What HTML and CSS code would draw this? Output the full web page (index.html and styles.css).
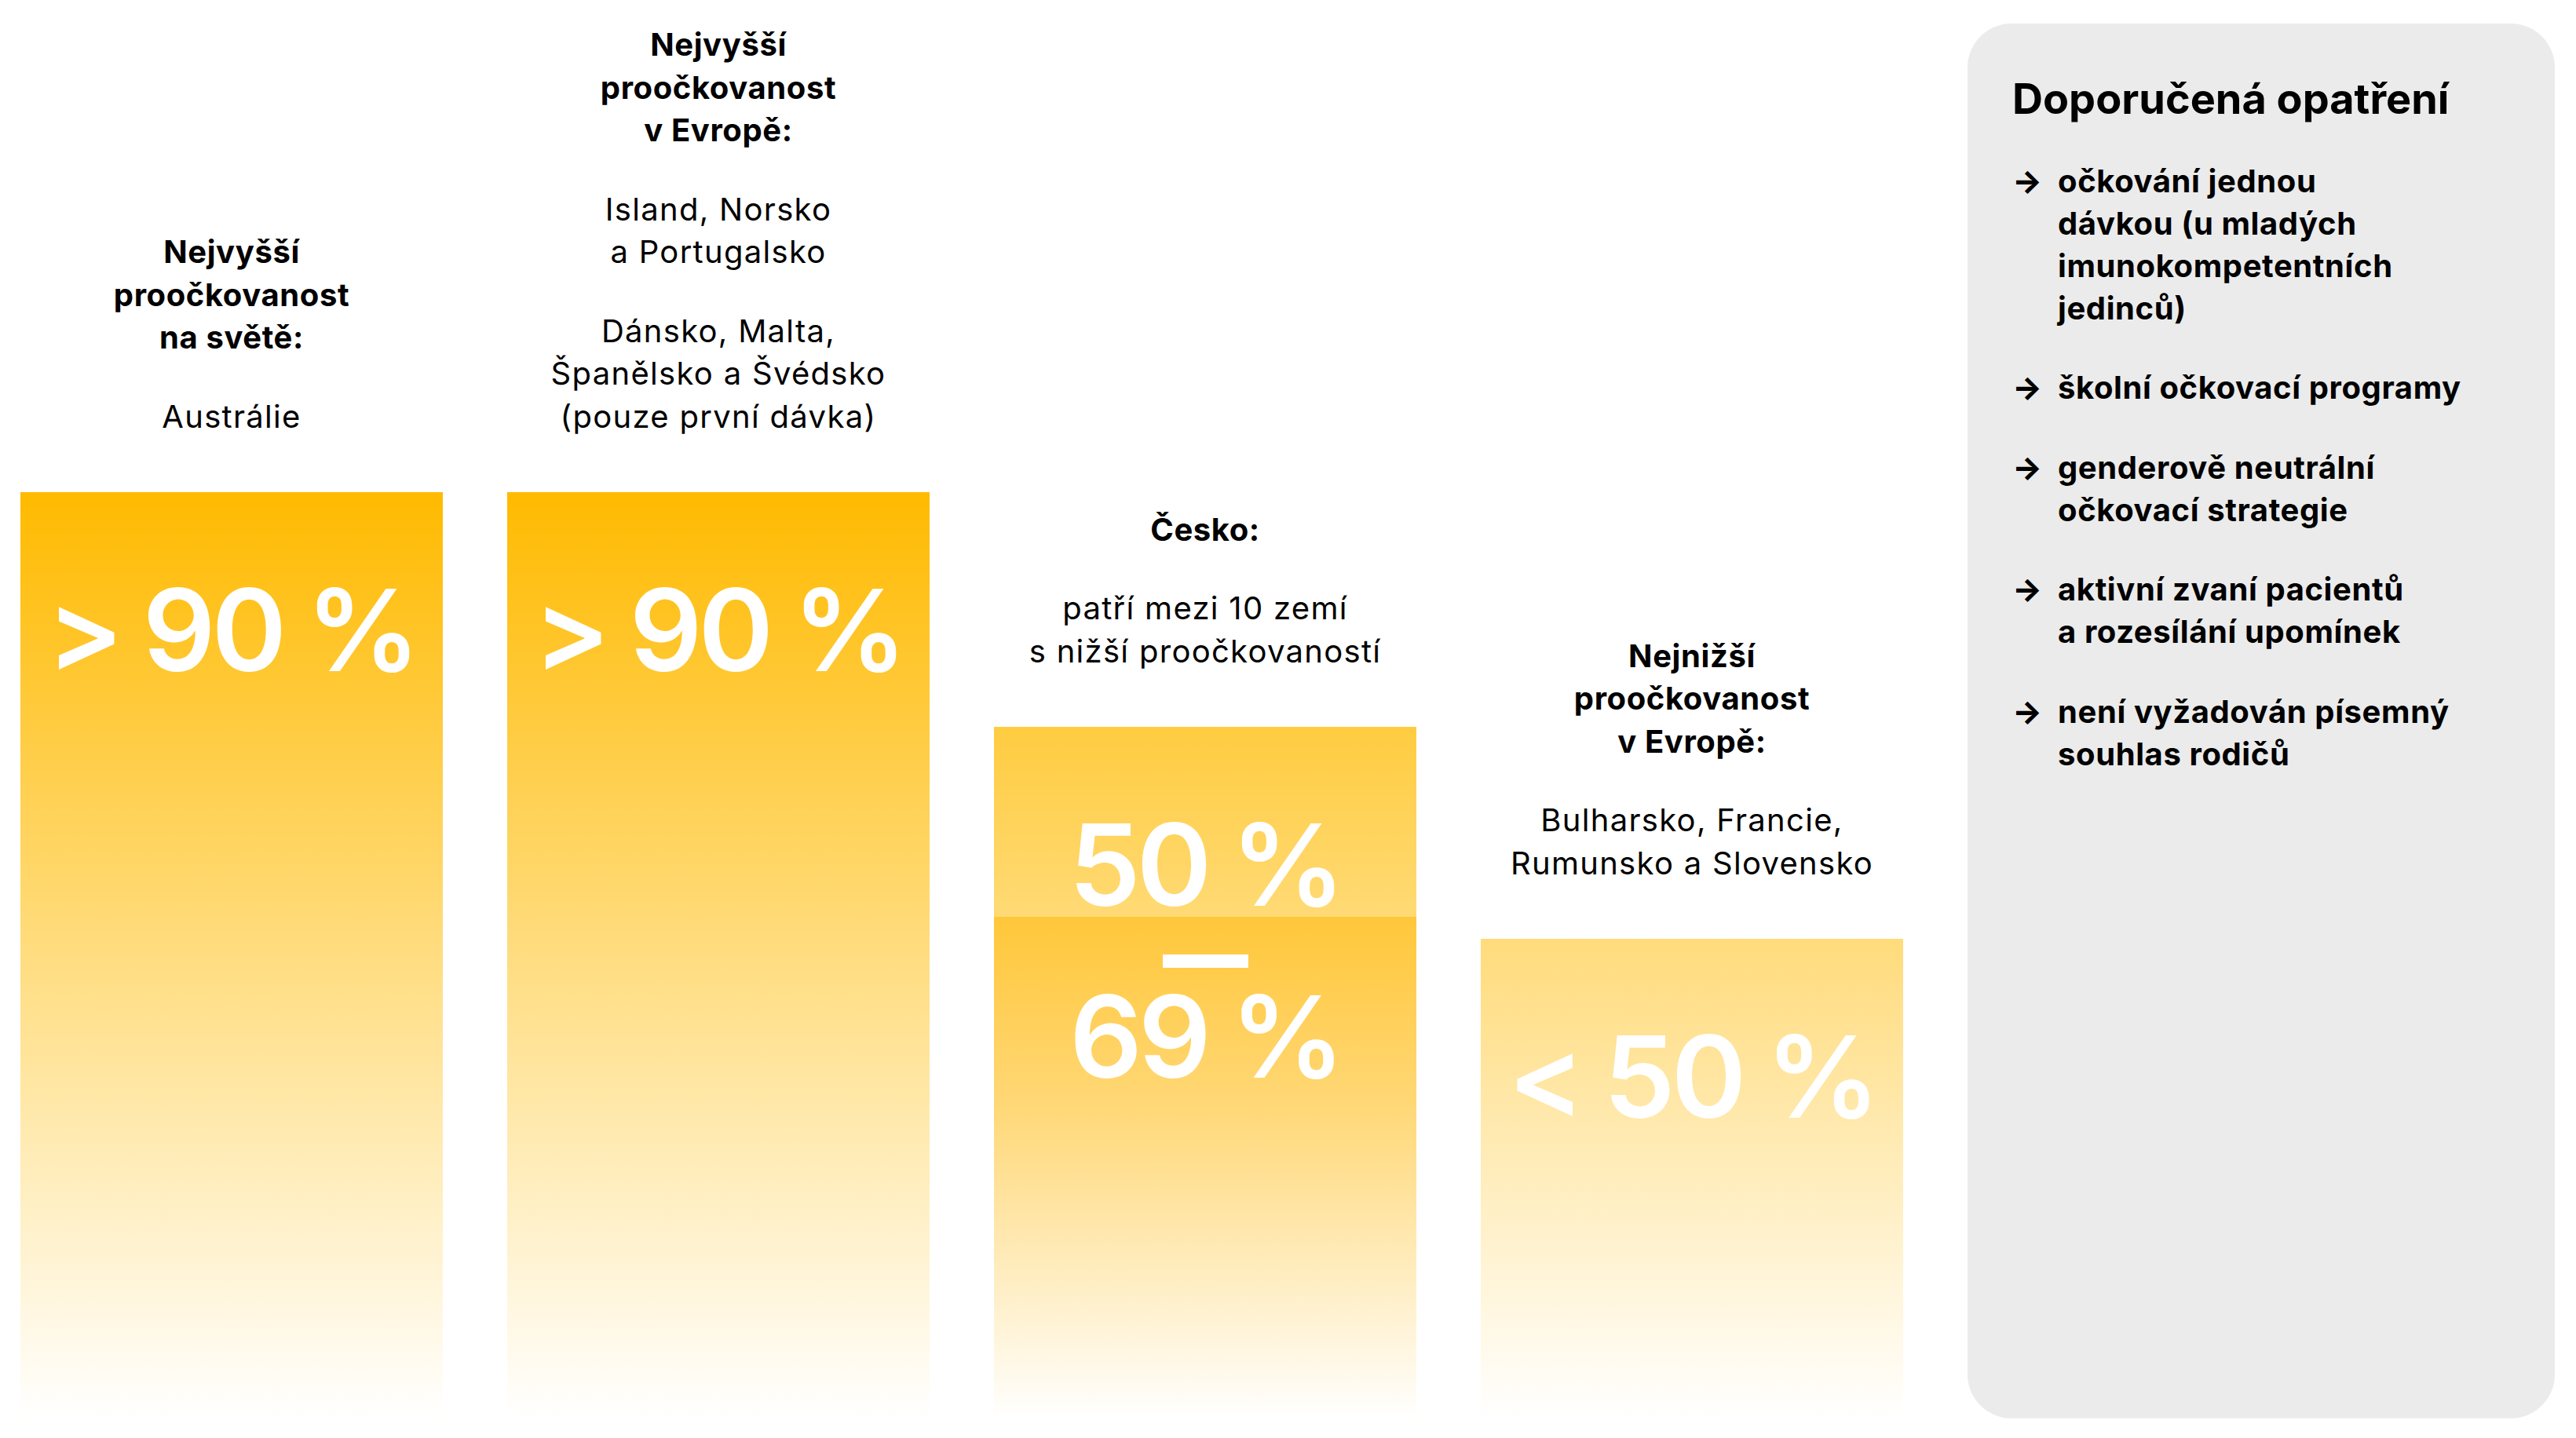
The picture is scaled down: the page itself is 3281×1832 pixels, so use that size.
FILE: index.html
```html
<!DOCTYPE html>
<html lang="cs">
<head>
<meta charset="utf-8">
<title>Proočkovanost</title>
<link rel="stylesheet" href="styles.css">
</head>
<body>
<main class="page">
  <section class="col">
    <div class="label">
      <p class="b">Nejvyšší<br>proočkovanost<br>na světě:</p>
      <p>Austrálie</p>
    </div>
    <div class="bar bar-high"><span class="num">&gt; 90 %</span></div>
  </section>

  <section class="col">
    <div class="label">
      <p class="b">Nejvyšší<br>proočkovanost<br>v Evropě:</p>
      <p>Island, Norsko<br>a Portugalsko</p>
      <p>Dánsko, Malta,<br>Španělsko a Švédsko<br>(pouze první dávka)</p>
    </div>
    <div class="bar bar-high"><span class="num">&gt; 90 %</span></div>
  </section>

  <section class="col">
    <div class="label">
      <p class="b">Česko:</p>
      <p>patří mezi 10 zemí<br>s nižší proočkovaností</p>
    </div>
    <div class="bar bar-cz">
      <div class="cz-top"><span class="num">50 %</span></div>
      <div class="cz-bottom">
        <span class="dash" role="presentation"></span>
        <span class="num num-69">69 %</span>
      </div>
    </div>
  </section>

  <section class="col">
    <div class="label">
      <p class="b">Nejnižší<br>proočkovanost<br>v Evropě:</p>
      <p>Bulharsko, Francie,<br>Rumunsko a Slovensko</p>
    </div>
    <div class="bar bar-low"><span class="num">&lt; 50 %</span></div>
  </section>

  <aside class="panel">
    <h2 class="panel-title">Doporučená opatření</h2>
    <ul class="measures">
      <li><span class="arrow">→</span><span>očkování jednou<br>dávkou (u mladých<br>imunokompetentních<br>jedinců)</span></li>
      <li><span class="arrow">→</span><span>školní očkovací programy</span></li>
      <li><span class="arrow">→</span><span>genderově neutrální<br>očkovací strategie</span></li>
      <li><span class="arrow">→</span><span>aktivní zvaní pacientů<br>a rozesílání upomínek</span></li>
      <li><span class="arrow">→</span><span>není vyžadován písemný<br>souhlas rodičů</span></li>
    </ul>
  </aside>
</main>
</body>
</html>
```

FILE: styles.css
```css
html, body {
  margin: 0;
  padding: 0;
  background: #ffffff;
}

body {
  font-family: Inter, "Noto Sans", "DejaVu Sans", sans-serif;
  color: #000000;
}

.page {
  box-sizing: border-box;
  height: 1832px;
  width: 3281px;
  padding: 30px 27px 27px 26px;
  display: grid;
  grid-template-columns: repeat(4, 538px) 748px;
  column-gap: 82px;
}

.col {
  display: flex;
  flex-direction: column;
  justify-content: flex-end;
}

.label {
  text-align: center;
  font-size: 40px;
  line-height: 54.5px;
  margin-bottom: 69px;
  letter-spacing: 1.3px;
}

.label p {
  margin: 0;
}

.label p + p {
  margin-top: 46px;
}

.label .b {
  font-weight: 700;
  letter-spacing: 0.6px;
}

.bar {
  box-sizing: border-box;
  text-align: center;
  color: #ffffff;
}

.num {
  display: block;
  font-size: 145px;
  font-weight: 600;
  line-height: 1;
  letter-spacing: -5px;
  word-spacing: -2px;
  white-space: nowrap;
}

.bar-high {
  height: 1180px;
  padding-top: 103px;
  background: linear-gradient(180deg, #ffba00 0%, #ffffff 100%);
}

.bar-cz {
  height: 881px;
  display: flex;
  flex-direction: column;
}

.cz-top {
  box-sizing: border-box;
  height: 242px;
  padding-top: 103px;
  background: linear-gradient(180deg, #ffcc40 0%, #ffda75 100%);
}

.cz-bottom {
  flex: 1;
  display: flex;
  flex-direction: column;
  align-items: center;
  background: linear-gradient(180deg, #ffc73a 0%, #ffd775 37%, #ffffff 100%);
}

.dash {
  display: block;
  width: 109px;
  height: 17px;
  margin-top: 48px;
  background: #ffffff;
}

.num-69 {
  margin-top: 15px;
}

.bar-low {
  height: 611px;
  padding-top: 103px;
  background: linear-gradient(180deg, #ffdb7b 0%, #ffffff 100%);
}

.panel {
  background: #ebebeb;
  border-radius: 56px;
  padding: 64px 40px 0 57px;
}

.panel-title {
  margin: 0 0 45px;
  font-size: 54px;
  line-height: 1.2;
  font-weight: 700;
}

.measures {
  list-style: none;
  margin: 0;
  padding: 0;
  font-size: 40px;
  line-height: 54px;
  font-weight: 700;
  letter-spacing: 0.6px;
}

.measures li {
  display: flex;
}

.measures li + li {
  margin-top: 47.5px;
}

.arrow {
  flex: 0 0 58px;
  font-weight: 800;
}
```
